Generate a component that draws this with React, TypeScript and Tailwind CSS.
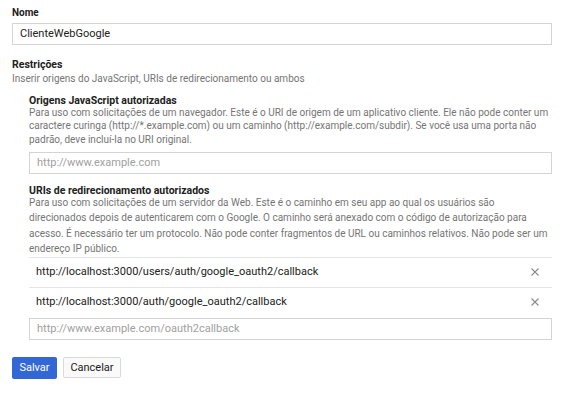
import React from 'react';

const uris = [
  'http://localhost:3000/users/auth/google_oauth2/callback',
  'http://localhost:3000/auth/google_oauth2/callback',
];

const CloseIcon: React.FC = () => (
  <svg width="8" height="8" viewBox="0 0 8 8" className="text-[#8a8a8a]">
    <path d="M0.5 0.5L7.5 7.5M7.5 0.5L0.5 7.5" stroke="currentColor" strokeWidth="1.1" fill="none" />
  </svg>
);

const App: React.FC = () => {
  return (
    <div className="min-h-[406px] bg-white pl-[12px] pr-[13px] pt-[7px] font-['Roboto',sans-serif] text-[10px] text-[#212121]">
      <label className="block text-[10px] font-bold leading-[12px]">Nome</label>
      <div className="mt-[4px] flex h-[22px] items-center border border-[#d4d4d4] px-[7px] text-[11px] text-[#212121]">
        ClienteWebGoogle
      </div>

      <div className="mt-[13px] text-[10.5px] font-bold leading-[14px]">Restrições</div>
      <div className="leading-[14px] text-[#757575]">Inserir origens do JavaScript, URIs de redirecionamento ou ambos</div>

      <div className="ml-[17px] mt-[9px]">
        <div className="text-[10.5px] font-bold leading-[12px]">Origens JavaScript autorizadas</div>
        <p className="-mt-[1px] leading-[13.3px] text-[#757575]">
          Para uso com solicitações de um navegador. Este é o URI de origem de um aplicativo cliente. Ele não pode conter um
          caractere curinga (http://*.example.com) ou um caminho (http://example.com/subdir). Se você usa uma porta não
          padrão, deve incluí-la no URI original.
        </p>
        <div className="mt-[6px] flex h-[22px] items-center border border-[#d4d4d4] px-[7px] text-[11px] text-[#a0a0a0]">
          http://www.example.com
        </div>

        <div className="mt-[11px] text-[10.5px] font-bold leading-[12px]">URIs de redirecionamento autorizados</div>
        <p className="-mt-[2px] leading-[15.5px] text-[#757575]">
          Para uso com solicitações de um servidor da Web. Este é o caminho em seu app ao qual os usuários são
          direcionados depois de autenticarem com o Google. O caminho será anexado com o código de autorização para
          acesso. É necessário ter um protocolo. Não pode conter fragmentos de URL ou caminhos relativos. Não pode ser um
          endereço IP público.
        </p>

        <div>
          {uris.map((uri) => (
            <div key={uri} className="flex h-[30px] items-center justify-between border-t border-[#e5e5e5] pl-[7px] pr-[13px] text-[11px] text-[#212121]">
              <span>{uri}</span>
              <CloseIcon />
            </div>
          ))}
        </div>
        <div className="mt-[1px] flex h-[22px] items-center border border-[#d4d4d4] px-[7px] text-[11px] text-[#a0a0a0]">
          http://www.example.com/oauth2callback
        </div>
      </div>

      <div className="mt-[17px] flex items-center gap-[6px]">
        <button className="h-[22px] w-[45px] rounded-[2px] bg-[#3367d6] text-[11px] text-white">Salvar</button>
        <button className="h-[21px] w-[58px] rounded-[2px] border border-[#d9d9d9] bg-[#fafafa] text-[11px] text-[#212121]">
          Cancelar
        </button>
      </div>
    </div>
  );
};

export default App;
